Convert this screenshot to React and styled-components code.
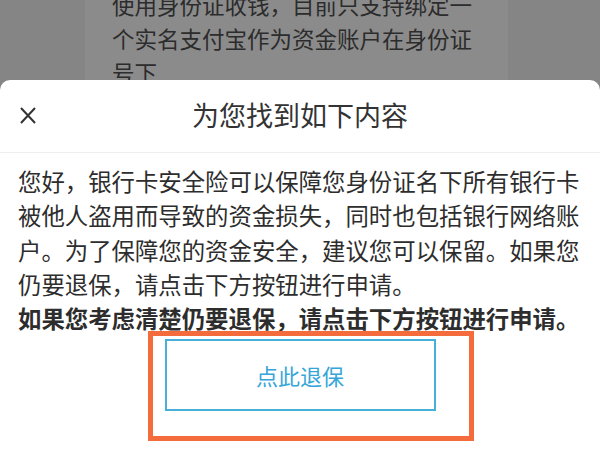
import React from 'react';
import styled, { createGlobalStyle } from 'styled-components';

const GlobalStyle = createGlobalStyle`
  *, *::before, *::after {
    box-sizing: border-box;
  }
  html, body {
    margin: 0;
    padding: 0;
    background: #868686;
  }
  body {
    font-family: "Noto Sans CJK SC", "Noto Sans", sans-serif;
  }
`;

const Screen = styled.div`
  width: 600px;
  height: 450px;
  overflow: hidden;
  display: flex;
  flex-direction: column;
  background: #858585;
`;

const Backdrop = styled.div`
  height: 80px;
  flex-shrink: 0;
  display: flex;
  padding-left: 85px;
  overflow: hidden;
`;

const BackCard = styled.div`
  width: 423px;
  background: #8b8b8b;
  padding-left: 27px;
`;

const BackText = styled.p`
  margin: -13px 0 0;
  font-size: 22.5px;
  line-height: 34px;
  color: #2c2c2c;
  width: 364px;
`;

const Sheet = styled.div`
  flex: 1;
  background: #fff;
  border-radius: 10px 10px 0 0;
  display: flex;
  flex-direction: column;
`;

const Header = styled.div`
  height: 73px;
  display: flex;
  align-items: center;
  position: relative;
  border-bottom: 1px solid #efefef;
`;

const Close = styled.button`
  position: absolute;
  left: 13px;
  top: 20px;
  width: 30px;
  height: 30px;
  padding: 0;
  border: 0;
  background: none;
  display: flex;
  align-items: center;
  justify-content: center;
`;

const Title = styled.h1`
  flex: 1;
  margin: 0;
  text-align: center;
  font-size: 27px;
  font-weight: 400;
  color: #333;
  line-height: 1;
  padding-bottom: 4px;
`;

const Body = styled.div`
  padding: 11px 16px 0 18px;
`;

const Para = styled.p`
  margin: 0;
  font-size: 23.4px;
  line-height: 34.3px;
  color: #2d2d2d;
  font-weight: ${(p) => (p.$bold ? 700 : 400)};
`;

const Actions = styled.div`
  display: flex;
  justify-content: center;
  margin-top: 4px;
`;

const ButtonWrap = styled.div`
  position: relative;
`;

const RefundButton = styled.button`
  width: 271px;
  height: 72px;
  border: 2px solid #48afd9;
  background: #fff;
  color: #36a6d8;
  font-family: "Noto Sans CJK SC", sans-serif;
  font-size: 22px;
  padding: 0;
`;

const Highlight = styled.div`
  position: absolute;
  left: -17px;
  top: -8px;
  right: -38px;
  bottom: -30px;
  border: 5px solid #f46c3c;
  pointer-events: none;
`;

export default function App() {
  return (
    <>
      <GlobalStyle />
      <Screen>
        <Backdrop>
          <BackCard>
            <BackText>使用身份证收钱，目前只支持绑定一个实名支付宝作为资金账户在身份证号下</BackText>
          </BackCard>
        </Backdrop>
        <Sheet>
          <Header>
            <Close aria-label="关闭">
              <svg width="16" height="17" viewBox="0 0 16 17">
                <path d="M1 1 L15 16 M15 1 L1 16" stroke="#333" strokeWidth="2" fill="none" />
              </svg>
            </Close>
            <Title>为您找到如下内容</Title>
          </Header>
          <Body>
            <Para>
              您好，银行卡安全险可以保障您身份证名下所有银行卡被他人盗用而导致的资金损失，同时也包括银行网络账户。为了保障您的资金安全，建议您可以保留。如果您仍要退保，请点击下方按钮进行申请。
            </Para>
            <Para $bold>如果您考虑清楚仍要退保，请点击下方按钮进行申请。</Para>
          </Body>
          <Actions>
            <ButtonWrap>
              <RefundButton>点此退保</RefundButton>
              <Highlight />
            </ButtonWrap>
          </Actions>
        </Sheet>
      </Screen>
    </>
  );
}
